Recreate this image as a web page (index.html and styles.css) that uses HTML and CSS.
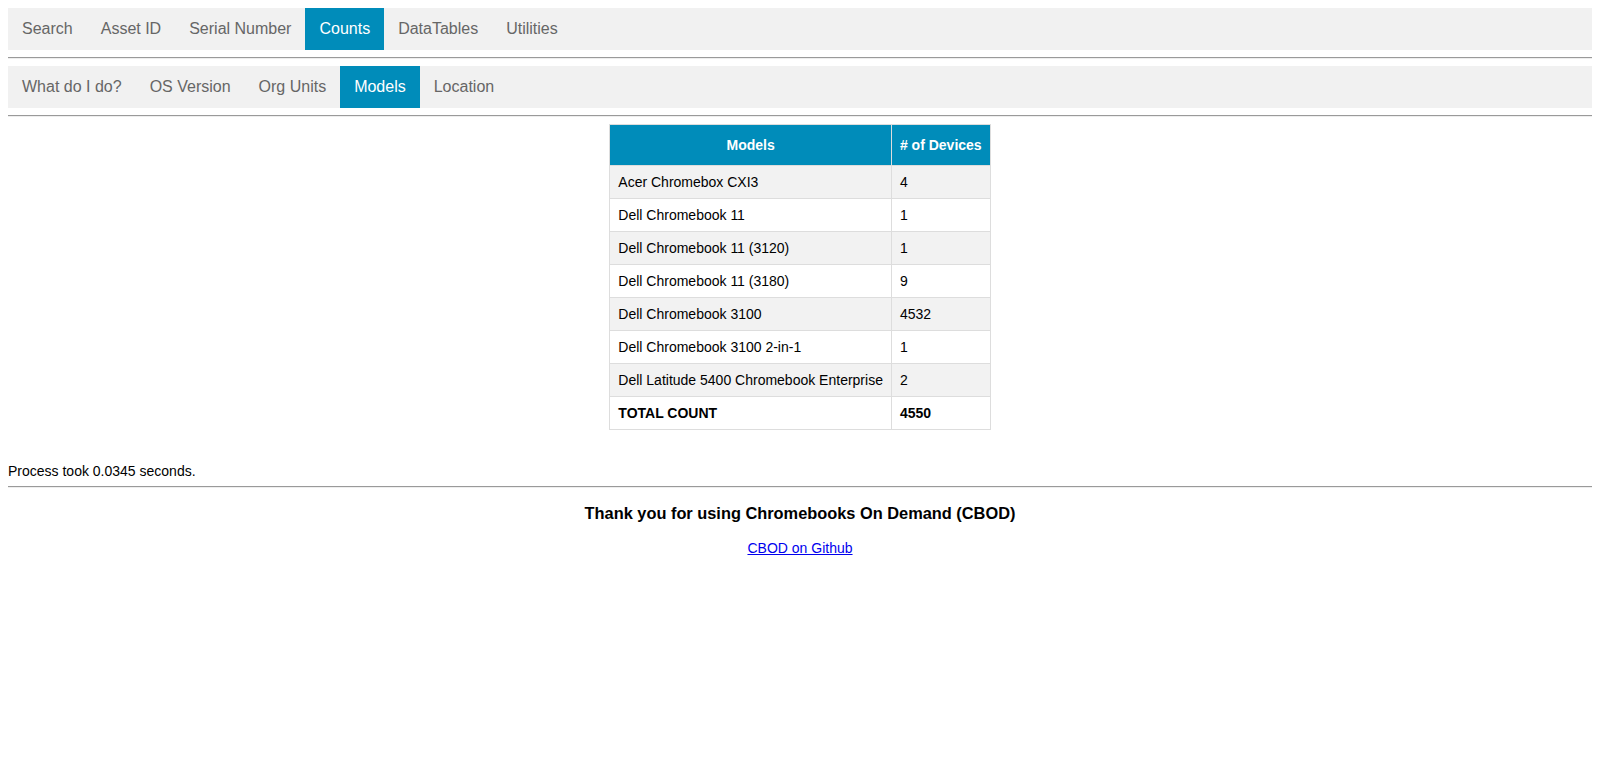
FILE: index.html
```html
<!DOCTYPE html>
<html>
<head>
<meta charset="utf-8">
<title>CBOD</title>
<link rel="stylesheet" href="styles.css">
</head>
<body>
<ul class="nav">
  <li><a href="#">Search</a></li>
  <li><a href="#">Asset ID</a></li>
  <li><a href="#">Serial Number</a></li>
  <li><a class="active" href="#">Counts</a></li>
  <li><a href="#">DataTables</a></li>
  <li><a href="#">Utilities</a></li>
</ul>
<hr>
<ul class="nav">
  <li><a href="#">What do I do?</a></li>
  <li><a href="#">OS Version</a></li>
  <li><a href="#">Org Units</a></li>
  <li><a class="active" href="#">Models</a></li>
  <li><a href="#">Location</a></li>
</ul>
<hr>
<table class="counts">
  <thead>
    <tr><th>Models</th><th># of Devices</th></tr>
  </thead>
  <tbody>
    <tr><td>Acer Chromebox CXI3</td><td>4</td></tr>
    <tr><td>Dell Chromebook 11</td><td>1</td></tr>
    <tr><td>Dell Chromebook 11 (3120)</td><td>1</td></tr>
    <tr><td>Dell Chromebook 11 (3180)</td><td>9</td></tr>
    <tr><td>Dell Chromebook 3100</td><td>4532</td></tr>
    <tr><td>Dell Chromebook 3100 2-in-1</td><td>1</td></tr>
    <tr><td>Dell Latitude 5400 Chromebook Enterprise</td><td>2</td></tr>
    <tr class="total"><td>TOTAL COUNT</td><td>4550</td></tr>
  </tbody>
</table>
<p class="process">Process took 0.0345 seconds.</p>
<hr>
<h3 class="thanks">Thank you for using Chromebooks On Demand (CBOD)</h3>
<p class="github"><a href="#">CBOD on Github</a></p>
</body>
</html>
```
FILE: styles.css
```css
body {
  margin: 8px;
  font-family: "Liberation Sans", Arial, sans-serif;
  font-size: 14px;
  color: #000;
  background: #fff;
}
.nav {
  list-style: none;
  margin: 0;
  padding: 0;
  display: flex;
  background: #f1f1f1;
}
.nav a {
  display: block;
  padding: 12px 14px;
  font-size: 16px;
  line-height: 18px;
  color: #666;
  text-decoration: none;
}
.nav a.active {
  background: #008cba;
  color: #fff;
}
hr {
  margin: 7px 0;
  border: 0;
  border-top: 1px solid #9a9a9a;
  border-bottom: 1px solid #eee;
  height: 0;
}
.counts {
  border-collapse: collapse;
  margin: 0 auto;
  font-size: 14px;
}
.counts th, .counts td {
  border: 1px solid #ddd;
  text-align: left;
  line-height: 16px;
}
.counts th {
  background: #008cba;
  color: #fff;
  padding: 12px 8px;
  text-align: center;
  font-weight: bold;
}
.counts td {
  padding: 8px;
}
.counts tbody tr:nth-child(odd) {
  background: #f2f2f2;
}
.counts .total td {
  font-weight: bold;
}
.process {
  margin: 33px 0 0;
  line-height: 16px;
}
.thanks {
  text-align: center;
  font-size: 1.17em;
  margin: 16px 0 17px;
}
.github {
  text-align: center;
  margin: 0;
}
.github a {
  color: #00e;
}
```
